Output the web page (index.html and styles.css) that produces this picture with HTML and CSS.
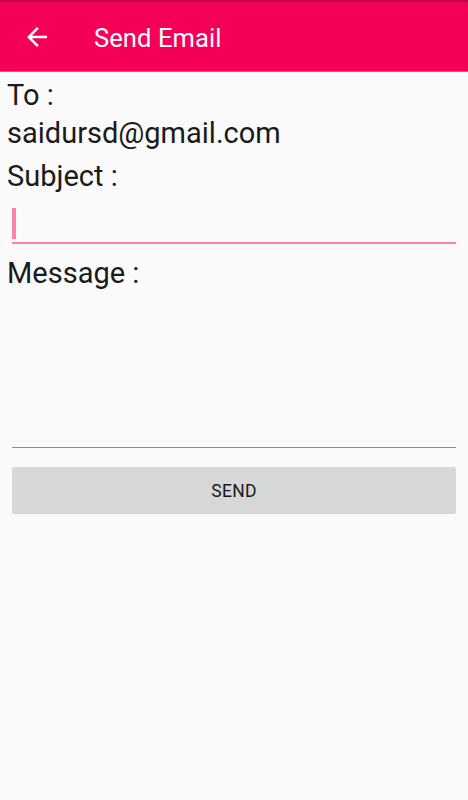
FILE: index.html
```html
<!DOCTYPE html>
<html lang="en">
<head>
<meta charset="utf-8">
<title>Send Email</title>
<link rel="stylesheet" href="styles.css">
</head>
<body>
<header class="appbar">
  <button class="back" aria-label="Back">
    <svg viewBox="0 0 24 24" width="30" height="30"><path d="M20 11H7.83l5.59-5.59L12 4l-8 8 8 8 1.41-1.41L7.83 13H20v-2z" fill="#fff"/></svg>
  </button>
  <h1 class="title">Send Email</h1>
</header>
<main class="content">
  <div class="label label-to">To :</div>
  <div class="label label-email">saidursd@gmail.com</div>
  <div class="label label-subject">Subject :</div>
  <div class="field subject-field"><span class="cursor"></span></div>
  <div class="label label-message">Message :</div>
  <div class="field message-field"></div>
  <button class="send">SEND</button>
</main>
</body>
</html>
```
FILE: styles.css
```css
* { box-sizing: border-box; }
html, body { margin: 0; padding: 0; }
body {
  background: #fafafa;
  font-family: Roboto, "Liberation Sans", sans-serif;
  color: #1a1a1a;
  width: 468px;
  height: 800px;
  overflow: hidden;
}
.appbar {
  height: 72px;
  background: #f50057;
  display: flex;
  align-items: center;
  padding-top: 2px;
  box-shadow: inset 0 3px 3px -2px rgba(0,0,0,0.35);
  border-bottom: 1px solid #f7477f;
}
.back {
  border: 0;
  background: none;
  padding: 0;
  margin-left: 22px;
  width: 30px;
  height: 30px;
  display: flex;
}
.title {
  margin: 0 0 0 42px;
  padding-top: 2px;
  font-weight: 400;
  font-size: 25.5px;
  color: #fff;
  letter-spacing: 0.1px;
}
.content {
  display: flex;
  flex-direction: column;
  padding: 0 12px 0 7px;
}
.label {
  font-size: 29px;
  line-height: 30px;
  color: #1a1a1a;
}
.label-to { margin-top: 8px; }
.label-email { margin-top: 8px; }
.label-subject { margin-top: 13px; }
.field {
  margin-left: 5px;
}
.subject-field {
  height: 53px;
  border-bottom: 2px solid #ff80ab;
  display: flex;
  align-items: flex-end;
  padding-bottom: 3px;
}
.cursor {
  width: 4px;
  height: 31px;
  background: #ff80ab;
}
.label-message { margin-top: 14px; }
.message-field {
  height: 160px;
  border-bottom: 1px solid #8c8c8c;
}
.send {
  margin: 19px 0 0 5px;
  height: 47px;
  border: 0;
  border-radius: 2px;
  background: #d6d7d7;
  font-family: Roboto, "Liberation Sans", sans-serif;
  font-size: 17.5px;
  color: #1a1a1a;
  letter-spacing: 0.3px;
}
```
